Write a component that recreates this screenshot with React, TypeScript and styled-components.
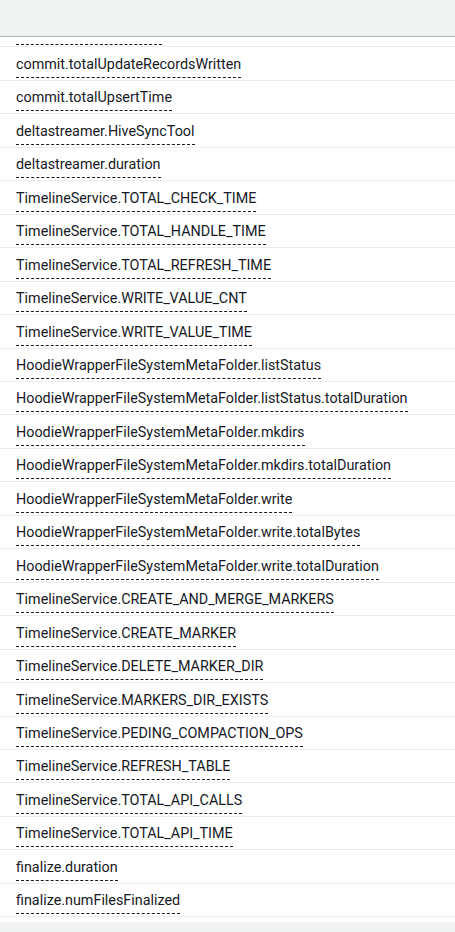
import React from "react";
import styled, { createGlobalStyle } from "styled-components";

const GlobalStyle = createGlobalStyle`
  html, body {
    margin: 0;
    padding: 0;
    background: #ffffff;
  }
  body {
    font-family: Roboto, "Noto Sans", Arial, sans-serif;
    color: #16191f;
    -webkit-font-smoothing: antialiased;
  }
`;

const Page = styled.div`
  width: 455px;
  height: 932px;
  display: flex;
  flex-direction: column;
  background: #f2f3f3;
  overflow: hidden;
`;

const HeaderBar = styled.div`
  flex: 0 0 36px;
  background: #f2f3f3;
  border-bottom: 1px solid #aab7b8;
`;

const Viewport = styled.div`
  flex: 0 0 885px;
  overflow: hidden;
  background: #ffffff;
`;

const List = styled.ul`
  list-style: none;
  margin: -23px 0 0 0;
  padding: 0;
`;

const Row = styled.li`
  box-sizing: border-box;
  height: 33.46px;
  padding: 7.5px 16px 0 16px;
  border-bottom: 1px solid #eaeded;
  display: flex;
  align-items: flex-start;
`;

const MetricName = styled.span`
  font-size: 14.35px;
  line-height: 20px;
  padding-bottom: 2px;
  border-bottom: 1px dashed #16191f;
  color: #16191f;
  white-space: nowrap;
  cursor: help;
`;

const metrics = [
  "commit.totalScanTime",
  "commit.totalUpdateRecordsWritten",
  "commit.totalUpsertTime",
  "deltastreamer.HiveSyncTool",
  "deltastreamer.duration",
  "TimelineService.TOTAL_CHECK_TIME",
  "TimelineService.TOTAL_HANDLE_TIME",
  "TimelineService.TOTAL_REFRESH_TIME",
  "TimelineService.WRITE_VALUE_CNT",
  "TimelineService.WRITE_VALUE_TIME",
  "HoodieWrapperFileSystemMetaFolder.listStatus",
  "HoodieWrapperFileSystemMetaFolder.listStatus.totalDuration",
  "HoodieWrapperFileSystemMetaFolder.mkdirs",
  "HoodieWrapperFileSystemMetaFolder.mkdirs.totalDuration",
  "HoodieWrapperFileSystemMetaFolder.write",
  "HoodieWrapperFileSystemMetaFolder.write.totalBytes",
  "HoodieWrapperFileSystemMetaFolder.write.totalDuration",
  "TimelineService.CREATE_AND_MERGE_MARKERS",
  "TimelineService.CREATE_MARKER",
  "TimelineService.DELETE_MARKER_DIR",
  "TimelineService.MARKERS_DIR_EXISTS",
  "TimelineService.PEDING_COMPACTION_OPS",
  "TimelineService.REFRESH_TABLE",
  "TimelineService.TOTAL_API_CALLS",
  "TimelineService.TOTAL_API_TIME",
  "finalize.duration",
  "finalize.numFilesFinalized",
];

export default function App() {
  return (
    <>
      <GlobalStyle />
      <Page>
        <HeaderBar />
        <Viewport>
          <List>
            {metrics.map((m) => (
              <Row key={m}>
                <MetricName>{m}</MetricName>
              </Row>
            ))}
          </List>
        </Viewport>
      </Page>
    </>
  );
}
